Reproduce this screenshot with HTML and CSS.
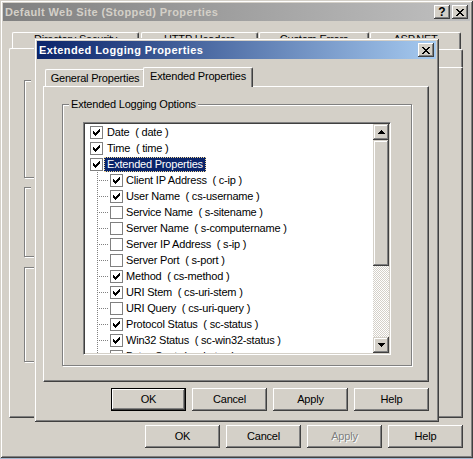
FILE: index.html
```html
<!DOCTYPE html>
<html>
<head>
<meta charset="utf-8">
<link rel="stylesheet" href="styles.css">
</head>
<body>
<svg class="defs" xmlns="http://www.w3.org/2000/svg">
  <symbol id="chk" viewBox="0 0 7 7"><path d="M6 0h1v1h-1z M5 1h2v1h-2z M0 2h1v1h-1z M4 2h3v1h-3z M0 3h2v1h-2z M3 3h3v1h-3z M0 4h5v1h-5z M1 5h3v1h-3z M2 6h1v1h-1z"/></symbol>
  <symbol id="up" viewBox="0 0 7 4"><path d="M3 0h1v1h-1z M2 1h3v1h-3z M1 2h5v1h-5z M0 3h7v1h-7z"/></symbol>
  <symbol id="down" viewBox="0 0 7 4"><path d="M0 0h7v1h-7z M1 1h5v1h-5z M2 2h3v1h-3z M3 3h1v1h-1z"/></symbol>
  <symbol id="close" viewBox="0 0 8 7"><path d="M0 0h2v1h-2z M6 0h2v1h-2z M1 1h2v1h-2z M5 1h2v1h-2z M2 2h4v1h-4z M3 3h2v1h-2z M2 4h4v1h-4z M1 5h2v1h-2z M5 5h2v1h-2z M0 6h2v1h-2z M6 6h2v1h-2z"/></symbol>
</svg>

<div class="win bgwin">
  <div class="title inactive">
    <span class="title-text">Default Web Site (Stopped) Properties</span>
    <div class="tbtns">
      <div class="tbtn help">?</div>
      <div class="tbtn"><svg class="ico-x"><use href="#close"/></svg></div>
    </div>
  </div>
  <div class="client">
    <div class="tabrow row1">
      <div class="tab">Directory Security</div>
      <div class="tab">HTTP Headers</div>
      <div class="tab">Custom Errors</div>
      <div class="tab">ASP.NET</div>
    </div>
    <div class="tabrow row2">
      <div class="tab sel"></div>
      <div class="tab"></div>
      <div class="tab"></div>
      <div class="tab"></div>
      <div class="tab"></div>
    </div>
    <div class="panel bgpanel">
      <div class="gbox bggb gb1"><span class="glabel blank"></span></div>
      <div class="gbox bggb gb2"><span class="glabel blank"></span></div>
      <div class="gbox bggb gb3"><span class="glabel blank gl3"></span></div>
    </div>
    <div class="btnrow">
      <div class="btn">OK</div>
      <div class="btn">Cancel</div>
      <div class="btn disabled">Apply</div>
      <div class="btn">Help</div>
    </div>
  </div>
</div>

<div class="win dlg">
  <div class="title active">
    <span class="title-text">Extended Logging Properties</span>
    <div class="tbtns">
      <div class="tbtn"><svg class="ico-x"><use href="#close"/></svg></div>
    </div>
  </div>
  <div class="client">
    <div class="tabrow dtabs">
      <div class="tab dtab general">General Properties</div>
      <div class="tab dtab sel">Extended Properties</div>
    </div>
    <div class="panel dpanel">
      <div class="gbox dgb">
        <span class="glabel">Extended Logging Options</span>
        <div class="tree">
          <div class="list">
            <div class="row top"><span class="cb"><svg><use href="#chk"/></svg></span><span class="lbl">Date  ( date )</span></div>
            <div class="row top"><span class="cb"><svg><use href="#chk"/></svg></span><span class="lbl">Time  ( time )</span></div>
            <div class="row top"><span class="cb"><svg><use href="#chk"/></svg></span><span class="lbl sel">Extended Properties</span></div>
            <div class="row child"><span class="branch"></span><span class="cb"><svg><use href="#chk"/></svg></span><span class="lbl">Client IP Address  ( c-ip )</span></div>
            <div class="row child"><span class="branch"></span><span class="cb"><svg><use href="#chk"/></svg></span><span class="lbl">User Name  ( cs-username )</span></div>
            <div class="row child"><span class="branch"></span><span class="cb"></span><span class="lbl">Service Name  ( s-sitename )</span></div>
            <div class="row child"><span class="branch"></span><span class="cb"></span><span class="lbl">Server Name  ( s-computername )</span></div>
            <div class="row child"><span class="branch"></span><span class="cb"></span><span class="lbl">Server IP Address  ( s-ip )</span></div>
            <div class="row child"><span class="branch"></span><span class="cb"></span><span class="lbl">Server Port  ( s-port )</span></div>
            <div class="row child"><span class="branch"></span><span class="cb"><svg><use href="#chk"/></svg></span><span class="lbl">Method  ( cs-method )</span></div>
            <div class="row child"><span class="branch"></span><span class="cb"><svg><use href="#chk"/></svg></span><span class="lbl">URI Stem  ( cs-uri-stem )</span></div>
            <div class="row child"><span class="branch"></span><span class="cb"></span><span class="lbl">URI Query  ( cs-uri-query )</span></div>
            <div class="row child"><span class="branch"></span><span class="cb"><svg><use href="#chk"/></svg></span><span class="lbl">Protocol Status  ( sc-status )</span></div>
            <div class="row child"><span class="branch"></span><span class="cb"><svg><use href="#chk"/></svg></span><span class="lbl">Win32 Status  ( sc-win32-status )</span></div>
            <div class="row child"><span class="branch"></span><span class="cb"></span><span class="lbl">Bytes Sent  ( sc-bytes )</span></div>
          </div>
          <div class="sb">
            <div class="sbtn"><svg class="arr"><use href="#up"/></svg></div>
            <div class="thumb"></div>
            <div class="track"></div>
            <div class="sbtn"><svg class="arr"><use href="#down"/></svg></div>
          </div>
        </div>
      </div>
    </div>
    <div class="btnrow">
      <div class="btn default">OK</div>
      <div class="btn">Cancel</div>
      <div class="btn">Apply</div>
      <div class="btn">Help</div>
    </div>
  </div>
</div>
</body>
</html>
```

FILE: styles.css
```css
* { box-sizing: border-box; }
html, body { margin: 0; padding: 0; }
body {
  width: 473px;
  height: 459px;
  background: #a6b8d0;
  font: 11px/13px "Liberation Sans", Arial, sans-serif;
  letter-spacing: -0.2px;
  color: #000;
  position: relative;
  overflow: hidden;
}
.defs { display: none; }

/* windows */
.win {
  background: #d4d0c8;
  padding: 3px;
  display: flex;
  flex-direction: column;
  box-shadow: inset 1px 1px #d4d0c8, inset -1px -1px #404040, inset 2px 2px #fff, inset -2px -2px #808080;
}
.bgwin { width: 473px; height: 458px; position: relative; z-index: 0; }
.dlg { position: absolute; left: 34px; top: 38px; width: 405px; height: 384px; z-index: 2; }

.title {
  height: 18px;
  flex: none;
  display: flex;
  align-items: center;
  padding: 0 2px;
  font-weight: bold;
  letter-spacing: 0.4px;
  white-space: nowrap;
}
.title.inactive { background: linear-gradient(to right, #808080, #c0c0c0); color: #d4d0c8; }
.title.active { background: linear-gradient(to right, #0a246a, #a6caf0); color: #fff; }
.title-text { flex: 1; }
.tbtns { display: flex; gap: 2px; }
.tbtn {
  width: 16px;
  height: 14px;
  background: #d4d0c8;
  box-shadow: inset -1px -1px #404040, inset 1px 1px #fff, inset -2px -2px #808080;
  display: flex;
  align-items: center;
  justify-content: center;
  color: #000;
  font-size: 12px;
  line-height: 12px;
  letter-spacing: 0;
}
.ico-x { width: 8px; height: 7px; shape-rendering: crispEdges; }

.client { flex: 1; display: flex; flex-direction: column; }
.bgwin .client { padding: 11px 7px 0 6px; }
.dlg .client { padding: 8px 7px 0 6px; }

/* tabs */
.tabrow { display: flex; flex: none; align-items: flex-start; }
.tab {
  border: 1px solid #fff;
  border-bottom: 0;
  border-right-color: #404040;
  box-shadow: inset -1px 0 #808080;
  border-radius: 2px 2px 0 0;
  text-align: center;
  white-space: nowrap;
  overflow: hidden;
  background: #d4d0c8;
}
.row1 { height: 17px; margin-left: 3px; }
.row1 .tab { height: 17px; line-height: 11px; padding-top: 1px; }
.row1 .tab:nth-child(1) { width: 127px; }
.row1 .tab:nth-child(2) { width: 117px; margin-left: 2px; }
.row1 .tab:nth-child(3) { width: 110px; margin-left: 1px; }
.row1 .tab:nth-child(4) { width: 91px; margin-left: 1px; }
.row2 { height: 18px; gap: 2px; }
.row2 .tab { height: 18px; }
.row2 .tab:nth-child(1) { width: 96px; }
.row2 .tab:nth-child(2) { width: 80px; }
.row2 .tab:nth-child(3) { width: 78px; }
.row2 .tab:nth-child(4) { width: 86px; }
.row2 .tab:nth-child(5) { flex: 1; }
.row2 .tab.sel { height: 20px; margin-top: -1px; position: relative; z-index: 1; }

.dtabs { height: 19px; padding-left: 2px; }
.dtab { height: 17px; margin-top: 2px; padding-top: 2px; }
.dtab.general { width: 100px; }
.dtab.sel { width: 110px; height: 20px; margin: 0 0 0 -2px; position: relative; z-index: 1; }

.panel {
  border: 1px solid;
  border-color: #fff #404040 #404040 #fff;
  box-shadow: inset -1px -1px #808080;
  background: #d4d0c8;
  flex: none;
}
.bgpanel { height: 351px; padding: 12px 0 0 14px; }
.dpanel { height: 296px; padding: 17px 0 0 18px; }

/* group boxes */
.gbox { border: 1px solid #808080; box-shadow: inset 1px 1px #fff, 1px 1px #fff; }
.glabel {
  display: block;
  width: max-content;
  margin: -7px 0 0 6px;
  padding: 0 2px;
  background: #d4d0c8;
  line-height: 13px;
}
.glabel.blank { width: 90px; height: 13px; }
.bggb { width: 406px; }
.gb1 { height: 98px; }
.gb2 { height: 70px; margin-top: 9px; }
.gb3 { height: 95px; margin-top: 10px; }
.gl3 { margin-left: 9px; }
.dgb { width: 350px; height: 262px; }

/* tree */
.tree {
  margin: 11px 0 0 20px;
  width: 308px;
  height: 233px;
  display: flex;
  background: #fff;
  border: 1px solid;
  border-color: #808080 #fff #fff #808080;
  box-shadow: inset 1px 1px #404040, inset -1px -1px #d4d0c8;
  padding: 1px;
}
.list { flex: 1; overflow: hidden; }
.row { height: 16px; display: flex; align-items: center; white-space: pre; flex: none; }
.row.top { padding-left: 5px; }
.row.child { padding-left: 12px; }
.cb {
  width: 13px;
  height: 13px;
  flex: none;
  border: 1px solid #808080;
  background: #fff;
  display: flex;
  align-items: center;
  justify-content: center;
}
.cb svg { width: 7px; height: 7px; shape-rendering: crispEdges; }
.lbl { height: 15px; line-height: 13px; padding: 0 2px; border: 1px solid transparent; }
.top .lbl { margin-left: 1px; }
.lbl.sel { background: #0a246a; color: #fff; border: 1px dotted #f5db95; }
.branch {
  width: 11px;
  margin-right: 2px;
  align-self: stretch;
  flex: none;
  background:
    linear-gradient(#808080 50%, transparent 0) 0 0 / 1px 2px repeat-y,
    linear-gradient(to right, #808080 50%, transparent 0) 0 8px / 2px 1px repeat-x;
}

/* scrollbar */
.sb { width: 16px; flex: none; display: flex; flex-direction: column; }
.sbtn, .thumb {
  background: #d4d0c8;
  box-shadow: inset -1px -1px #404040, inset 1px 1px #d4d0c8, inset -2px -2px #808080, inset 2px 2px #fff;
  flex: none;
}
.sbtn { height: 16px; display: flex; align-items: center; justify-content: center; }
.arr { width: 7px; height: 4px; shape-rendering: crispEdges; }
.thumb { height: 126px; }
.track { flex: 1; background: repeating-conic-gradient(#d4d0c8 0 25%, #fff 0 50%) 0 0 / 2px 2px; }

/* buttons */
.btnrow { display: flex; justify-content: flex-end; gap: 6px; flex: none; margin-top: 7px; }
.dlg .btnrow { margin-top: 6px; }
.btn {
  width: 75px;
  height: 23px;
  display: flex;
  align-items: center;
  justify-content: center;
  background: #d4d0c8;
  box-shadow: inset -1px -1px #404040, inset 1px 1px #fff, inset -2px -2px #808080;
}
.btn.default { border: 1px solid #000; }
.btn.disabled { color: #808080; text-shadow: 1px 1px #fff; }
```
